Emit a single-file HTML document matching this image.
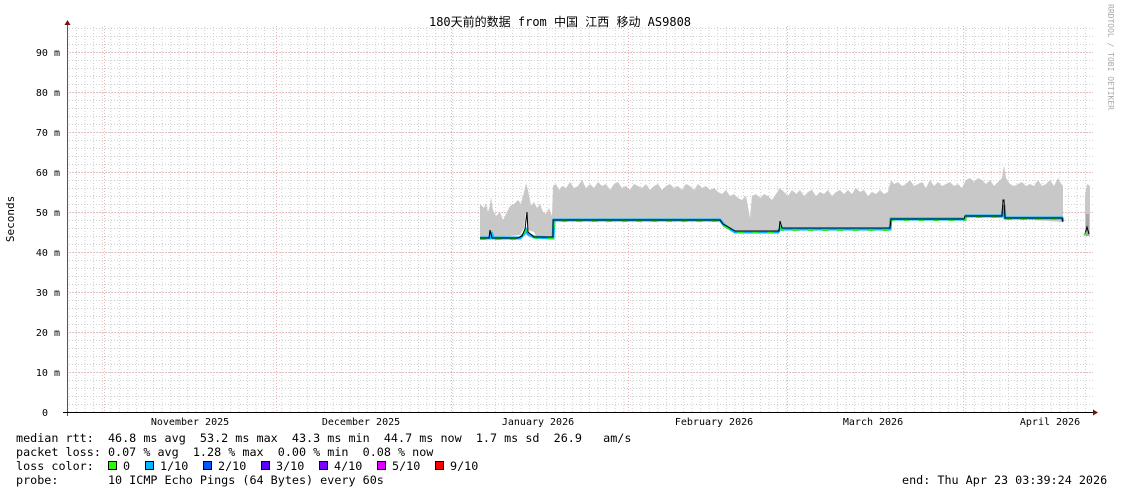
<!DOCTYPE html>
<html><head><meta charset="utf-8"><style>
html,body{margin:0;padding:0;background:#fff;}
body{width:1121px;height:494px;position:relative;overflow:hidden;}
svg{position:absolute;left:0;top:0;}
text{font-family:"DejaVu Sans Mono","Liberation Mono",monospace;fill:#000;}
</style></head><body>
<svg width="1121" height="494" viewBox="0 0 1121 494" xmlns="http://www.w3.org/2000/svg">
<defs>
<pattern id="hg" x="0" y="28" width="1121" height="8" patternUnits="userSpaceOnUse">
<line x1="0" y1="0.5" x2="1121" y2="0.5" stroke="#cfcfcf" stroke-width="1" stroke-dasharray="1,2"/>
</pattern>
<pattern id="vg" x="67.5" y="0" width="8.55" height="494" patternUnits="userSpaceOnUse">
<line x1="0.5" y1="0" x2="0.5" y2="494" stroke="#cfcfcf" stroke-width="1" stroke-dasharray="1,2"/>
</pattern>
</defs>
<rect x="67" y="26" width="1026" height="386" fill="url(#hg)"/>
<rect x="67" y="26" width="1026" height="386" fill="url(#vg)"/>
<g stroke="#f0b0b0" stroke-width="1" stroke-dasharray="1,2">
<line x1="67" y1="52.5" x2="1093" y2="52.5"/><line x1="67" y1="92.5" x2="1093" y2="92.5"/>
<line x1="67" y1="132.5" x2="1093" y2="132.5"/><line x1="67" y1="172.5" x2="1093" y2="172.5"/>
<line x1="67" y1="212.5" x2="1093" y2="212.5"/><line x1="67" y1="252.5" x2="1093" y2="252.5"/>
<line x1="67" y1="292.5" x2="1093" y2="292.5"/><line x1="67" y1="332.5" x2="1093" y2="332.5"/>
<line x1="67" y1="372.5" x2="1093" y2="372.5"/>
<line x1="104.5" y1="26" x2="104.5" y2="412"/><line x1="276.5" y1="26" x2="276.5" y2="412"/>
<line x1="451.5" y1="26" x2="451.5" y2="412"/><line x1="628.5" y1="26" x2="628.5" y2="412"/>
<line x1="787.5" y1="26" x2="787.5" y2="412"/><line x1="963.5" y1="26" x2="963.5" y2="412"/>
</g>
<polygon fill="#c8c8c8" points="480,238 480,204 484,208 486,203 488,212 490,205 491,197 493,210 496,216 500,212 503,220 506,214 510,206 514,204 518,200 521,204 524,192 526,183 528,190 531,206 534,202 537,208 540,204 543,212 546,214 549,208 552,216 553,186 556,184 559,190 562,186 566,188 570,182 574,188 578,186 582,180 586,188 590,184 594,188 598,182 602,186 606,184 610,190 614,184 618,182 622,188 626,186 630,190 634,184 638,186 642,188 646,184 650,190 654,186 658,184 662,190 666,186 670,184 674,188 678,186 682,190 686,184 690,186 694,190 698,184 702,188 706,186 710,190 714,188 718,192 722,194 726,190 730,196 734,194 738,198 742,200 746,196 750,218 752,196 756,194 760,198 764,194 768,196 772,200 776,194 780,188 784,192 788,196 792,190 796,194 800,190 804,196 808,192 812,190 816,196 820,192 824,194 828,190 832,196 836,192 840,190 844,194 848,190 852,194 856,188 860,192 864,190 868,196 872,192 876,194 880,190 884,194 888,192 891,180 894,184 898,182 902,186 906,184 910,180 914,186 918,184 922,182 926,188 930,180 934,186 938,182 942,186 946,184 950,182 954,186 958,184 962,188 966,180 970,178 974,182 978,178 982,180 986,184 990,180 994,186 998,182 1002,178 1004,165 1006,178 1010,184 1014,186 1018,184 1022,182 1026,186 1030,184 1034,186 1038,180 1042,186 1046,184 1050,180 1054,186 1058,178 1060,182 1063,186 1063,222 1006,218 1004,218 1004,202 1002,202 1002,218 965,216 960,219 891,219 890,229 782,229 780,222 778,233 735,233 724,226 720,220 555,220 553,238 537,238 534,232 528,230 526,212 524,228 520,235 493,238 490,232 488,238"/>
<polygon fill="#c8c8c8" points="1085,236 1085,196 1087,184 1090,186 1090,236"/>
<polygon fill="#a8a8a8" points="1086,236 1086,214 1089,214 1089,236"/>
<polyline fill="none" stroke="#00b8ff" stroke-width="3" points="480,238 490,238 491,232 493,238 520,238 524,234 526,230 528,234 534,237 553,238 554,220 720,220 724,225 735,232 778,232 781,227 782,229 890,229 891,219 965,219 966,216 1002,216 1004,205 1005,218 1062,218 1063,221"/>
<g stroke="#20f020" stroke-width="2" stroke-dasharray="6,9" fill="none">
<polyline points="480,239 520,239 526,230 536,238 553,238 554,221 720,221 724,226 735,232 778,232 781,227 782,230 890,230 891,220 965,220 966,217 1002,217 1005,219 1062,219"/>
</g>
<polyline fill="none" stroke="#000" stroke-width="1" points="480,238 489,238 490,230 492,238 518,238 522,236 525,229 527,212 528,232 534,237 553,237 553,220 720,220 723,224 735,231 779,231 780,221 782,228 890,228 891,219 964,219 965,216 1002,216 1003,200 1004,200 1005,218 1062,218 1063,222"/>
<polyline fill="none" stroke="#000" stroke-width="1" points="1085,234 1087,227 1089,234"/>
<polyline fill="none" stroke="#20f020" stroke-width="2" points="1084,235 1086,233"/>
<line x1="67.5" y1="22" x2="67.5" y2="416" stroke="#555" stroke-width="1"/>
<polygon points="64.5,25 67.5,20 70.5,25" fill="#7a1010"/>
<line x1="63" y1="412.5" x2="1095" y2="412.5" stroke="#000" stroke-width="1"/>
<polygon points="1093,409.5 1098,412.5 1093,415.5" fill="#7a1010"/>
<g font-size="10" text-anchor="end">
<text x="60" y="56">90 m</text><text x="60" y="96">80 m</text><text x="60" y="136">70 m</text>
<text x="60" y="176">60 m</text><text x="60" y="216">50 m</text><text x="60" y="256">40 m</text>
<text x="60" y="296">30 m</text><text x="60" y="336">20 m</text><text x="60" y="376">10 m</text>
<text x="48" y="416">0</text>
</g>
<g font-size="10" text-anchor="middle">
<text x="190" y="425">November 2025</text><text x="361" y="425">December 2025</text>
<text x="538" y="425">January 2026</text><text x="714" y="425">February 2026</text>
<text x="873" y="425">March 2026</text><text x="1050" y="425">April 2026</text>
</g>
<text x="0" y="0" font-size="11" text-anchor="middle" transform="translate(14,219) rotate(-90)">Seconds</text>
<text x="0" y="0" font-size="8" style="fill:#aaa" transform="translate(1108,4) rotate(90)">RRDTOOL / TOBI OETIKER</text>
<text x="560" y="26" font-size="12" text-anchor="middle" style='font-family:"DejaVu Sans Mono","Noto Sans CJK SC",monospace'>180天前的数据 from 中国 江西 移动 AS9808</text>
<g font-size="11.75">
<text x="16" y="442" xml:space="preserve">median rtt:  46.8 ms avg  53.2 ms max  43.3 ms min  44.7 ms now  1.7 ms sd  26.9   am/s</text>
<text x="16" y="456" xml:space="preserve">packet loss: 0.07 % avg  1.28 % max  0.00 % min  0.08 % now</text>
<text x="16" y="470" xml:space="preserve">loss color:  </text>
<text x="16" y="484" xml:space="preserve">probe:       10 ICMP Echo Pings (64 Bytes) every 60s</text>
<text x="902" y="484" xml:space="preserve">end: Thu Apr 23 03:39:24 2026</text>
<text x="123" y="470">0</text><text x="160" y="470">1/10</text><text x="218" y="470">2/10</text>
<text x="276" y="470">3/10</text><text x="334" y="470">4/10</text><text x="392" y="470">5/10</text><text x="450" y="470">9/10</text>
</g>
<g stroke="#000" stroke-width="1">
<rect x="108.5" y="461.5" width="8" height="8" fill="#26ff00"/>
<rect x="145.5" y="461.5" width="8" height="8" fill="#00b8ff"/>
<rect x="203.5" y="461.5" width="8" height="8" fill="#0059ff"/>
<rect x="261.5" y="461.5" width="8" height="8" fill="#5e00ff"/>
<rect x="319.5" y="461.5" width="8" height="8" fill="#7e00ff"/>
<rect x="377.5" y="461.5" width="8" height="8" fill="#dd00ff"/>
<rect x="435.5" y="461.5" width="8" height="8" fill="#ff0000"/>
</g>
</svg>
</body></html>
